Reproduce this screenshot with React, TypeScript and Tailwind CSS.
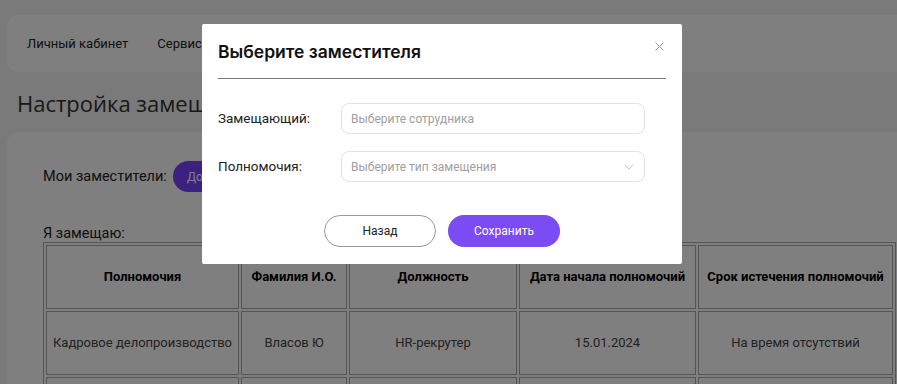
import React from "react";

const headers = [
  "Полномочия",
  "Фамилия И.О.",
  "Должность",
  "Дата начала полномочий",
  "Срок истечения полномочий",
];
const row = ["Кадровое делопроизводство", "Власов Ю", "HR-рекрутер", "15.01.2024", "На время отсутствий"];
const widths = ["w-[193px]", "w-[106px]", "w-[168px]", "w-[177px]", "w-[195px]"];

export default function App() {
  return (
    <div className="relative h-[384px] w-[897px] overflow-hidden bg-[#f4f4f4]" style={{ fontFamily: "Roboto, 'Noto Sans', sans-serif" }}>
      {/* underlying page */}
      <div className="pt-[15px] pl-[7px]">
        <div className="flex h-[57px] w-[900px] items-center gap-[29px] rounded-xl bg-white pl-[20px] text-[13px] text-[#222]">
          <span>Личный кабинет</span>
          <span>Сервисы</span>
        </div>
        <div className="mt-[17px] ml-[10px] whitespace-nowrap text-[22px] leading-[28px] text-[#333]" style={{ fontFamily: "'Open Sans', sans-serif" }}>
          Настройка замещений
        </div>
        <div className="mt-[15px] w-[900px] rounded-xl bg-white pl-[36px] pt-[29px] pb-[40px]">
          <div className="flex items-center gap-[6px] text-[14.5px] text-[#222]">
            <span>Мои заместители:</span>
            <span className="flex h-[31px] w-[110px] items-center rounded-full bg-[#7a42ff] pl-[14px] text-[12px] text-white">
              Добавить
            </span>
          </div>
          <div className="mt-[33px] text-[14.5px] leading-[17px] text-[#222]">Я замещаю:</div>
          <table className="table-fixed border-separate border-spacing-[2px] border border-[#aaa] text-[13px] text-[#444]">
            <thead>
              <tr>
                {headers.map((h, i) => (
                  <th key={h} className={`${widths[i]} h-[64px] whitespace-nowrap border border-[#aaa] p-0 font-bold text-black`}>
                    {h}
                  </th>
                ))}
              </tr>
            </thead>
            <tbody>
              <tr>
                {row.map((c, i) => (
                  <td key={i} className={`${widths[i]} h-[64px] whitespace-nowrap border border-[#aaa] p-0 text-center`}>
                    {c}
                  </td>
                ))}
              </tr>
              <tr>
                {row.map((_, i) => (
                  <td key={i} className="h-[64px] border border-[#aaa]"></td>
                ))}
              </tr>
            </tbody>
          </table>
        </div>
      </div>

      {/* overlay */}
      <div className="absolute inset-0 bg-black/50" />

      {/* modal */}
      <div className="absolute left-[202px] top-[24px] flex h-[240px] w-[480px] flex-col rounded-[2px] bg-white px-[16px]">
        <div className="relative flex h-[55px] items-center border-b border-[#777] pt-[2px]">
          <span className="text-[17.5px] font-semibold text-[#111]" style={{ fontFamily: "Inter, sans-serif" }}>Выберите заместителя</span>
          <svg className="absolute right-[2px] top-[18px]" width="9" height="9" viewBox="0 0 9 9">
            <path d="M0.5 0.5 L8.5 8.5 M8.5 0.5 L0.5 8.5" stroke="#999" strokeWidth="1" />
          </svg>
        </div>
        <div className="mt-[24px] flex flex-col gap-[17px] text-[13.5px] text-[#222]">
          <div className="flex items-center">
            <span className="w-[123px] shrink-0">Замещающий:</span>
            <div className="flex h-[31px] w-[304px] items-center rounded-lg border border-[#e2e2e2] px-[9px] text-[12px] text-[#a0a0a0]">
              Выберите сотрудника
            </div>
          </div>
          <div className="flex items-center">
            <span className="w-[123px] shrink-0">Полномочия:</span>
            <div className="flex h-[31px] w-[304px] items-center justify-between rounded-lg border border-[#e2e2e2] px-[9px] text-[12px] text-[#a0a0a0]">
              <span>Выберите тип замещения</span>
              <svg width="10" height="6" viewBox="0 0 10 6" className="mr-[1px]">
                <path d="M0.5 0.5 L5 5 L9.5 0.5" fill="none" stroke="#c8c8c8" strokeWidth="1" />
              </svg>
            </div>
          </div>
        </div>
        <div className="mt-[33px] flex justify-center gap-[12px] text-[12px]">
          <button className="h-[32px] w-[112px] rounded-full border border-[#999] bg-white text-[#222]">Назад</button>
          <button className="h-[32px] w-[112px] rounded-full bg-[#7b4bf3] text-white">Сохранить</button>
        </div>
      </div>
    </div>
  );
}
